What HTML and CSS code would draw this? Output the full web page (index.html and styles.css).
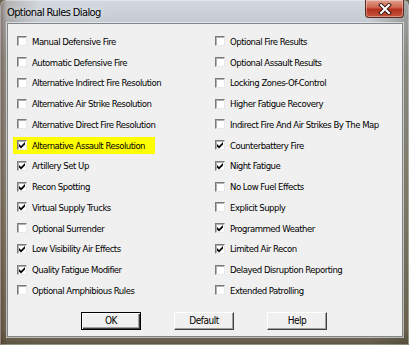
FILE: index.html
```html
<!DOCTYPE html>
<html lang="en">
<head>
  <meta charset="UTF-8" />
  <title>Optional Rules Dialog</title>
  <link rel="stylesheet" href="styles.css">
</head>
<body>
  <div class="window">
    <div class="titlebar">
      <span class="title">Optional Rules Dialog</span>
      <button class="close">
        <svg width="14" height="12" viewBox="0 0 14 12"><path d="M3 2 L11 10 M11 2 L3 10" stroke="#3a1a14" stroke-width="4" stroke-linecap="square"/><path d="M3 2 L11 10 M11 2 L3 10" stroke="#fff" stroke-width="2" stroke-linecap="square"/></svg>
      </button>
    </div>

    <div class="client">
      <div class="options">
        <label class="opt"><span class="box"></span>Manual Defensive Fire</label>
        <label class="opt"><span class="box"></span>Optional Fire Results</label>

        <label class="opt"><span class="box"></span>Automatic Defensive Fire</label>
        <label class="opt"><span class="box"></span>Optional Assault Results</label>

        <label class="opt"><span class="box"></span>Alternative Indirect Fire Resolution</label>
        <label class="opt"><span class="box"></span>Locking Zones-Of-Control</label>

        <label class="opt"><span class="box"></span>Alternative Air Strike Resolution</label>
        <label class="opt"><span class="box"></span>Higher Fatigue Recovery</label>

        <label class="opt"><span class="box"></span>Alternative Direct Fire Resolution</label>
        <label class="opt"><span class="box"></span>Indirect Fire And Air Strikes By The Map</label>

        <label class="opt"><span class="mark"><span class="box on"></span>Alternative Assault Resolution</span></label>
        <label class="opt"><span class="box on"></span>Counterbattery Fire</label>

        <label class="opt"><span class="box on"></span>Artillery Set Up</label>
        <label class="opt"><span class="box on"></span>Night Fatigue</label>

        <label class="opt"><span class="box on"></span>Recon Spotting</label>
        <label class="opt"><span class="box"></span>No Low Fuel Effects</label>

        <label class="opt"><span class="box on"></span>Virtual Supply Trucks</label>
        <label class="opt"><span class="box"></span>Explicit Supply</label>

        <label class="opt"><span class="box"></span>Optional Surrender</label>
        <label class="opt"><span class="box on"></span>Programmed Weather</label>

        <label class="opt"><span class="box on"></span>Low Visibility Air Effects</label>
        <label class="opt"><span class="box on"></span>Limited Air Recon</label>

        <label class="opt"><span class="box on"></span>Quality Fatigue Modifier</label>
        <label class="opt"><span class="box"></span>Delayed Disruption Reporting</label>

        <label class="opt"><span class="box"></span>Optional Amphibious Rules</label>
        <label class="opt"><span class="box"></span>Extended Patrolling</label>
      </div>

      <div class="buttons">
        <button class="btn default">OK</button>
        <button class="btn">Default</button>
        <button class="btn">Help</button>
      </div>
    </div>
  </div>
</body>
</html>
```

FILE: styles.css
```css
html, body { margin: 0; padding: 0; background: #6d6450; }
body {
  font-family: "Liberation Sans Narrow", "DejaVu Sans Condensed", sans-serif;
  font-size: 9.5px; letter-spacing: -0.5px; color: #000;
}

.window {
  width: 409px; height: 345px; box-sizing: border-box;
  display: flex; flex-direction: column;
  padding: 0 6px 8px 7px;
  border-radius: 6px 6px 0 0;
  background:
    linear-gradient(to right, rgba(70,40,30,.55) 0, rgba(90,70,55,.25) 7px, rgba(0,0,0,0) 40px, rgba(0,0,0,0) 370px, rgba(60,55,40,.35) 409px),
    linear-gradient(to bottom, #d3d9df 0, #c4cbd1 22px, #aeb1ab 60px, #9a9886 200px, #7c7560 330px, #5e5644 345px);
  box-shadow: inset 0 0 0 1px rgba(255,255,255,.35);
}

.titlebar { height: 23px; display: flex; align-items: flex-start; }
.title {
  font-size: 11px; letter-spacing: -0.6px; color: #000; line-height: 25px;
  text-shadow: 0 0 6px rgba(255,255,255,.9);
}
.close {
  margin-left: auto; margin-right: -1px; width: 39px; height: 18px; padding: 0;
  border: 1px solid #5a2a20; border-top: none; border-radius: 0 0 4px 4px;
  background: linear-gradient(to bottom, #e0a293 0, #d0604a 45%, #b3301c 55%, #c5553c 100%);
  display: flex; align-items: center; justify-content: center;
  box-shadow: inset 0 0 0 1px rgba(255,255,255,.35);
}

.client {
  flex: 1; background: #f0f0f0;
  border: 1px solid #80868c;
  box-shadow: 0 0 0 1px rgba(255,255,255,.55);
  padding: 7px 0 0 9px;
  display: flex; flex-direction: column;
}

.options { display: grid; grid-template-columns: 198px 1fr; grid-auto-rows: 20.75px; }
.opt { display: flex; align-items: center; white-space: nowrap; }
.mark {
  display: flex; align-items: center; background: #ffff00;
  margin-left: -4px; padding: 0 0 0 4px; width: 138px; height: 17px;
}

.box {
  width: 8px; height: 8px; flex: none; margin-right: 5px;
  background: #fff;
  border: 1px solid; border-color: #7a7a7a #e8e8e8 #e8e8e8 #7a7a7a;
  box-shadow: inset 1px 1px 0 #b0b0b0;
}
.box.on {
  background: #fff url("data:image/svg+xml;utf8,<svg xmlns='http://www.w3.org/2000/svg' width='8' height='8'><polygon points='1,3 3,5 7,1 7,3.5 3,7.5 1,5.5' fill='black'/></svg>") no-repeat 0 0;
}

.buttons { display: flex; margin-top: 11px; padding-left: 64px; gap: 33px; }
.btn {
  width: 60px; height: 18px; padding: 0; margin: 0;
  font-family: inherit; font-size: 10px; letter-spacing: -0.5px; color: #000;
  background: #f0f0f0;
  border: 1px solid; border-color: #ffffff #404040 #404040 #ffffff;
  box-shadow: inset -1px -1px 0 #a0a0a0;
}
.btn.default {
  border: 1px solid #000;
  box-shadow: inset 1px 1px 0 #fff, inset -1px -1px 0 #404040, inset -2px -2px 0 #a0a0a0;
}
```
